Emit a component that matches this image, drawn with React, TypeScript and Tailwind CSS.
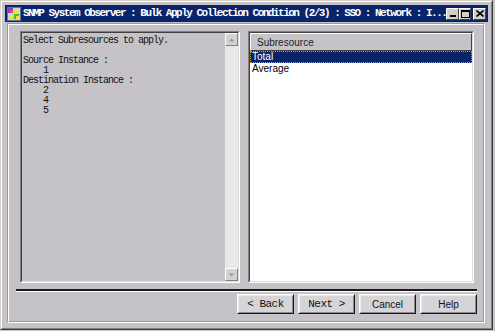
import React from "react";

const MONO = "font-['Liberation_Mono',monospace]";
const SANS = "font-['Liberation_Sans',Arial,sans-serif]";

function CapBtn({ children, className = "" }: { children: React.ReactNode; className?: string }) {
  return (
    <div className={`w-[13px] h-[12px] bg-[#d4d0c8] border border-t-white border-l-white border-r-[#404040] border-b-[#404040] flex items-center justify-center ${className}`}>
      {children}
    </div>
  );
}

function Btn({ label, mono }: { label: string; mono?: boolean }) {
  return (
    <div className="w-[57px] h-[20px] border border-t-white border-l-white border-r-[#1a1a1a] border-b-[#1a1a1a]">
      <div className="w-full h-full bg-[#d6d4d6] border border-t-[#ececec] border-l-[#ececec] border-r-[#8a888c] border-b-[#8a888c] flex items-center justify-center">
        <span className={mono ? `${MONO} text-[11px] tracking-[-0.5px] text-[#111] whitespace-pre` : `${SANS} text-[10px] text-[#111]`}>{label}</span>
      </div>
    </div>
  );
}

function ScrollBtn({ up }: { up?: boolean }) {
  return (
    <div className="w-[13px] h-[13px] bg-[#d4d2d4] border border-t-white border-l-white border-r-[#808080] border-b-[#808080] flex items-center justify-center">
      <svg width="7" height="4" viewBox="0 0 7 4">
        {up ? <polygon points="0.5,3.5 3.5,0.5 6.5,3.5" fill="#9a989c" /> : <polygon points="0.5,0.5 3.5,3.5 6.5,0.5" fill="#9a989c" />}
      </svg>
    </div>
  );
}

export default function App() {
  const lines = [
    "Select Subresources to apply.",
    "",
    "Source Instance :",
    "    1",
    "Destination Instance :",
    "    2",
    "    4",
    "    5",
  ];
  return (
    <div className="w-[495px] h-[331px] bg-[#c5c3c7]">
      <div className="w-[493px] h-[330px] border border-t-[#d4d0c8] border-l-[#d4d0c8] border-r-[#404040] border-b-[#404040] bg-[#c5c3c7]">
        <div className="h-full border border-t-white border-l-white border-r-[#808080] border-b-[#808080] p-[3px] flex flex-col">
          {/* title bar */}
          <div className="h-[17px] bg-[#0a246a] flex items-center shrink-0">
            <svg width="14" height="14" viewBox="0 0 14 14" className="ml-[2px] shrink-0">
              <rect x="0.5" y="0.5" width="13" height="13" fill="#c8d0ec" stroke="#6070b0" />
              <rect x="1" y="1" width="5" height="5" fill="#7848b8" />
              <rect x="3" y="3" width="3" height="3" fill="#e04880" />
              <rect x="7" y="2" width="5" height="4" fill="#f0e040" />
              <rect x="2" y="8" width="4" height="4" fill="#f0e040" />
              <rect x="7" y="7" width="5" height="5" fill="#48b848" />
              <rect x="9" y="9" width="3" height="3" fill="#f0e040" />
            </svg>
            <span className={`${MONO} text-[11px] font-bold tracking-[-1.5px] text-white whitespace-pre ml-[2px] leading-none`}>
              SNMP System Observer : Bulk Apply Collection Condition (2/3) : SSO : Network : I...
            </span>
            <div className="flex-1" />
            <CapBtn>
              <div className="w-[6px] h-[2px] bg-black mt-[5px]" />
            </CapBtn>
            <CapBtn>
              <div className="w-[9px] h-[8px] border border-black border-t-2" />
            </CapBtn>
            <CapBtn className="ml-[2px] mr-[2px]">
              <svg width="8" height="7" viewBox="0 0 8 7">
                <path d="M0.5 0.5 L7.5 6.5 M7.5 0.5 L0.5 6.5" stroke="#000" strokeWidth="1.6" />
              </svg>
            </CapBtn>
          </div>
          {/* content etched */}
          <div className="flex-1 mt-[1px] ml-[2px] mr-[3px] mb-[2px] border border-t-[#9a989c] border-l-[#9a989c] border-r-white border-b-white">
            <div className="h-full border border-t-white border-l-white border-r-[#9a989c] border-b-[#9a989c] flex flex-col">
              <div className="flex gap-[8px] mt-[6px] ml-[11px] mr-[9px] h-[252px]">
                {/* left text panel */}
                <div className="w-[220px] h-full flex border border-t-[#808080] border-l-[#808080] border-r-white border-b-white">
                  <div className="flex-1 flex border border-t-[#404040] border-l-[#404040] border-r-[#dcdcdc] border-b-[#dcdcdc] bg-[#c5c3c7]">
                    <div className={`flex-1 pl-[1px] pt-[3px] ${MONO} text-[10px] tracking-[-1px] leading-[10px] text-[#111]`}>
                      {lines.map((l, i) => (
                        <div key={i} className="h-[10px] whitespace-pre">{l}</div>
                      ))}
                    </div>
                    <div className="w-[13px] flex flex-col bg-[#e8e8e8]">
                      <ScrollBtn up />
                      <div className="flex-1" />
                      <ScrollBtn />
                    </div>
                  </div>
                </div>
                {/* right list */}
                <div className="flex-1 h-full flex border border-t-[#808080] border-l-[#808080] border-r-white border-b-white">
                  <div className="flex-1 flex flex-col border border-t-[#404040] border-l-[#404040] border-r-[#dcdcdc] border-b-[#dcdcdc] bg-white">
                    <div className="h-[18px] shrink-0 bg-[#c5c3c7] border border-t-white border-l-white border-r-[#404040] border-b-[#404040] flex items-center pl-[6px]">
                      <span className={`${SANS} text-[10px] text-[#222]`}>Subresource</span>
                    </div>
                    <div className="h-[12px] bg-[#0a246a] border border-dotted border-[#b0a050] flex items-center pl-[1px]">
                      <span className={`${SANS} text-[10px] text-white leading-none`}>Total</span>
                    </div>
                    <div className="h-[12px] flex items-center pl-[2px]">
                      <span className={`${SANS} text-[10px] text-black leading-none`}>Average</span>
                    </div>
                  </div>
                </div>
              </div>
              {/* separator */}
              <div className="mt-[6px] ml-[7px] mr-[6px] h-[3px] border-t-2 border-[#1a1a1a] border-b border-b-white" />
              {/* buttons */}
              <div className="flex justify-end gap-[4px] mt-[2px] mr-[6px]">
                <Btn label="< Back" mono />
                <Btn label="Next >" mono />
                <Btn label="Cancel" />
                <Btn label="Help" />
              </div>
            </div>
          </div>
        </div>
      </div>
    </div>
  );
}
